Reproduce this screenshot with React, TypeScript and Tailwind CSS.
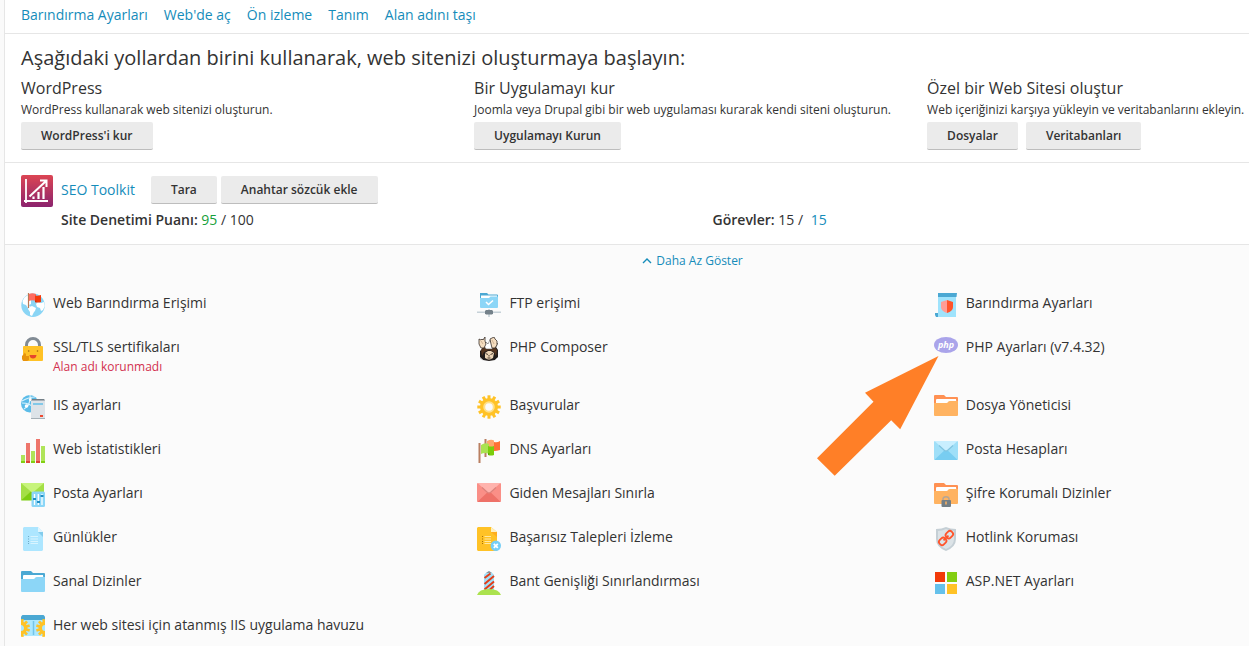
import React from "react";

type IconProps = { children: React.ReactNode };

function Icon({ children }: IconProps) {
  return (
    <svg viewBox="0 0 24 24" className="size-6 shrink-0" aria-hidden="true">
      {children}
    </svg>
  );
}

const GlobeFlag = () => (
  <Icon>
    <circle cx="12" cy="12.300" r="11.700" fill="#8ad5f5" />
    <path d="m1.500 8 2-3.500L7 2l3 1v8l-2 1 1 2-2 1-2-3-3-1z" fill="#fff" />
    <path d="m8 14 3-1 4 2-1 3-1 1-2 4-2-1v-3l-2-3zM17 9l3 1 3-1 .7 4-1.700 4-2 1-1-3-3-1-1-3z" fill="#fff" />
    <path d="M7.500 0v15" stroke="#b87955" strokeWidth="1.200" />
    <path d="M8 1q3-1.500 7 0v7q-4-1.500-7 0z" fill="#ff6c60" />
    <path d="M14 2.500q3 .5 6-.5v7q-3 1-6 .3z" fill="#f33a0b" />
    <path d="M14 7.500v1.800l2-1.300z" fill="#c12c08" />
  </Icon>
);

const PadlockFace = () => (
  <Icon>
    <path d="M5.500 11V8a6.500 6.500 0 0 1 13 0v3" fill="none" stroke="#818b94" strokeWidth="3" />
    <rect x="2" y="9" width="20" height="15" rx="1" fill="#ffc226" />
    <circle cx="7.700" cy="14" r=".8" fill="#9b6210" />
    <circle cx="16.500" cy="14" r=".8" fill="#9b6210" />
    <path d="M8.500 18h7q-.5 3.500-3.500 3.500T8.500 18z" fill="#e6472c" />
    <path d="M3.500 15.500 5 17v2h3v4l-2 1H2l-1-2v-3l2-2z" fill="#e8930c" />
  </Icon>
);

const GlobeServer = () => (
  <Icon>
    <circle cx="8.700" cy="8.700" r="8.700" fill="#5bbce8" />
    <path d="M1 6q7-4 13-4M3 14Q10 10 9 0M1 8q8 0 12 5" fill="none" stroke="#d8f2fd" strokeWidth="1.200" />
    <circle cx="5.500" cy="11" r="1.800" fill="#fff" />
    <circle cx="9.500" cy="4.500" r="1.600" fill="#fff" />
    <path d="M10 5.500 11 4h12l1 1.500V24H10z" fill="#dde3e8" />
    <path d="M10 5.500 11 4h12l1 1.500z" fill="#737f87" />
    <path d="M12 9h10" stroke="#5bbce8" strokeWidth="1.400" />
    <path d="M10 23.500h14" stroke="#a5afb6" />
    <path d="M19 21h3" stroke="#ef4a30" strokeWidth="2" />
  </Icon>
);

const Bars = () => (
  <Icon>
    <path d="M0 16h4v8H0zM10 12h4v12h-4zM20 7h4v17h-4z" fill="#afe458" />
    <path d="M5 4h4v20H5zM15 0h4v24h-4z" fill="#ee756b" />
    <path d="M0 22h4v2H0zM10 22h4v2h-4zM20 22h4v2h-4z" fill="#82cf13" />
    <path d="M5 22h4v2H5zM15 22h4v2h-4z" fill="#df4138" />
  </Icon>
);

const MailSliders = () => (
  <Icon>
    <path d="M0 0h23v17H0z" fill="#a4df46" />
    <path d="M0 17.500 11.500 7 23 17.500z" fill="#7dcd12" />
    <path d="M0 0h23L11.500 10z" fill="#c7f47b" />
    <rect x="10.500" y="8.500" width="13.500" height="15.500" rx="1.500" fill="#8bd6f7" />
    <path d="M13.500 11v11M17.300 11v11M21 11v11" stroke="#fff" strokeWidth="1.300" />
    <path d="M12 16h3M16 19h3M19.500 13h3" stroke="#218fc4" strokeWidth="1.800" />
  </Icon>
);

const LogFile = () => (
  <Icon>
    <path d="M3 0h14l5 5v18l-1 1H3l-1-1V1z" fill="#ade6ff" />
    <path d="M17 0v5h5z" fill="#e1f6ff" />
    <path d="M17 5h5v5z" fill="#84ccec" />
    <path d="M7 9.500h1M7 12h1M7 14.500h1M7 16.500h1" stroke="#6daac6" />
    <path d="M9.500 9.500H17M9.500 12H17M9.500 14.500H17M9.500 16.500H17" stroke="#d8f4ff" />
  </Icon>
);

const Folder = ({ back, front }: { back: string; front: string }) => (
  <>
    <path d="M0 1q0-1 1-1h9l2 2h11q1 0 1 1v7H0z" fill={back} />
    <path d="M2 5q0-1 1-1h19l.5 5H2z" fill="#fff" />
    <path d="M0 8h12.500q1 0 1.500-1t2-1h8v14q0 1-1 1H1q-1 0-1-1z" fill={front} />
  </>
);

const BlueFolder = () => (
  <Icon>
    <Folder back="#4ba8d3" front="#8cd6f7" />
  </Icon>
);

const OrangeFolder = () => (
  <Icon>
    <Folder back="#ff9153" front="#ffb361" />
  </Icon>
);

const LockedFolder = () => (
  <Icon>
    <Folder back="#ff9153" front="#ffb361" />
    <path d="M9 18v-2q0-2.300 3-2.300t3 2.300v2" fill="none" stroke="#b5a695" strokeWidth="1.500" />
    <rect x="7.500" y="17" width="9.500" height="7" rx="1" fill="#737e85" />
    <path d="M12 18.500v3" stroke="#ffb361" strokeWidth="1.500" />
  </Icon>
);

const poolTeeth = [-80, -48, -16, 16, 48, 80];

const GearPool = () => (
  <Icon>
    <path d="M0 3h24v18H0z" fill="#ace8ff" />
    <path d="M1.500 0h21L24 1.500V5H0V1.500z" fill="#4ba8d3" />
    <path d="M12.500 6v14" stroke="#74c5e8" strokeWidth="1.500" />
    <g fill="#ffc226">
      {poolTeeth.map((angle) => (
        <rect key={angle} x="5.500" y="11.700" width="3.500" height="2.600" transform={`rotate(${angle} 0 13)`} />
      ))}
      {poolTeeth.map((angle) => (
        <rect key={angle} x="15" y="11.700" width="3.500" height="2.600" transform={`rotate(${angle} 24 13)`} />
      ))}
    </g>
    <path d="M0 8.300a4.700 4.700 0 0 1 0 9.400M24 8.300a4.700 4.700 0 0 0 0 9.400" fill="none" stroke="#ffc226" strokeWidth="3.400" />
  </Icon>
);

const FolderNetwork = () => (
  <Icon>
    <path d="M3 0h7l1.500 1.500H20q1 0 1 1V14H3z" fill="#4ba8d3" />
    <path d="M4 2.500h16V6H4z" fill="#fff" />
    <path d="M3 5h9l1.500-1.500H21V14q0 1-1 1H4q-1 0-1-1z" fill="#8cd6f7" />
    <path d="m9 9 2.500 2.500L16 7.500" fill="none" stroke="#fff" strokeWidth="1.600" />
    <path d="M0 19.200h24M12 16v8" stroke="#c6d1d8" strokeWidth="1.600" />
    <path d="m8 18 1-1h6l1 1v2.500l-1 1H9l-1-1z" fill="#74818a" />
  </Icon>
);

const Composer = () => (
  <Icon>
    <path d="m3 8 3 3-3 3v6l3 3 6 1 6-1 3-3v-7l-2-3 2-4-9 3z" fill="#221d1b" />
    <path d="M4 13q2-4 8-4t8 4l-1 6-2-4-5-2-5 2-2 4z" fill="#55351f" />
    <path d="m7 9 2-4 2 2 2-4 2 5 2 1-2 3H9z" fill="#fff" stroke="#4a4643" strokeWidth=".5" />
    <path d="m2 2 2 1 1-1 1 1 2-3v4l1 3-2 4H4L2 7z" fill="#f5ddbf" stroke="#39302b" strokeWidth=".8" />
    <path d="m13 2 2-1 2-1 1 2 2 2v4l-2 3h-3l-1-4z" fill="#f5ddbf" stroke="#39302b" strokeWidth=".8" />
    <path d="m4 4 2 3M15 3l2 4" stroke="#b59676" strokeWidth=".6" />
    <path d="m8 16 3-2h3l3 2-1 5-3 1.500h-2L8 21z" fill="#ecd4b5" />
    <path d="m8.500 16.500 2.500 1m2.500 0 2.500-1M12 18v1.500m-1.500 1.500h3" stroke="#392a21" strokeWidth=".9" fill="none" />
    <path d="m3 21 3 2m12 0 2-2" stroke="#b8b8b8" strokeWidth=".8" />
  </Icon>
);

const Gear = () => (
  <Icon>
    {Array.from({ length: 12 }, (_, i) => (
      <rect key={i} x="10.500" y=".3" width="3" height="5" fill="#ffc226" transform={`rotate(${i * 30} 12 12)`} />
    ))}
    <circle cx="12" cy="12" r="9" fill="#ffc226" />
    <circle cx="12" cy="12" r="4.800" fill="#fafafa" stroke="#ffe08a" strokeWidth="2" />
  </Icon>
);

const Flags = () => (
  <Icon>
    <path d="M8.500 0v18M2.500 4v20" stroke="#b97f61" strokeWidth="2" />
    <path d="M10 2q4-2 7-.5V11q-3 1-7 0z" fill="#ffa66c" />
    <path d="M17 3q3 1 6-1v9q-3 1-6 1z" fill="#ff7035" />
    <path d="M4 6q4-3 8-1v10q-4-2-8 0z" fill="#aae351" />
    <path d="M11 7q3 1 6 0v9q-3 1-6 0z" fill="#7bcd0b" />
    <path d="M11 14v2l2-1z" fill="#559909" />
  </Icon>
);

const Envelope = ({ base, low, top, line }: { base: string; low: string; top: string; line: string }) => (
  <>
    <rect width="24" height="19" rx="1" fill={base} />
    <path d="m.5 18.700 9.500-9h4l9.500 9-.5.300H1z" fill={low} />
    <path d="m.5 0 10 9q1.500 1 3 0l10-9z" fill={top} />
    <path d="m5 4.500 5.500 5q1.500 1 3 0l5.500-5" fill="none" stroke={line} strokeWidth="1.200" />
  </>
);

const RedMail = () => (
  <Icon>
    <Envelope base="#fa8f87" low="#ee7168" top="#ffb3ad" line="#dc837c" />
  </Icon>
);

const BlueMail = () => (
  <Icon>
    <g transform="translate(0 2)">
      <Envelope base="#9fdff8" low="#78cdf1" top="#c9efff" line="#82c4df" />
    </g>
  </Icon>
);

const FailedFile = () => (
  <Icon>
    <path d="M1 0h13l6 5v19H1l-1-1V1z" fill="#ffc226" />
    <path d="M14 0v5h6z" fill="#fff0c2" />
    <path d="M14 5h6v5z" fill="#ffad1d" />
    <path d="M5 9.500h1M5 12h1M5 14.500h1M5 16.500h1" stroke="#a3710b" />
    <path d="M7.500 9.500H14M7.500 12H14M7.500 14.500H14M7.500 16.500H14" stroke="#ffe8a2" />
    <circle cx="18.800" cy="18.800" r="5.200" fill="#76cef5" />
    <path d="m16.800 16.800 4 4m0-4-4 4" stroke="#fff" strokeWidth="1.800" />
  </Icon>
);

const Lighthouse = () => (
  <Icon>
    <path d="M7 4q0-1 5-4 5 3 5 4v15H7z" fill="#a2dff8" />
    <path d="m9 2 3-2 3 2z" fill="#89949b" />
    <path d="m7.500 7 6-4.500M7.500 13 17 5M7.500 18.500 17 10.500M12 19.500l5-4.500" stroke="#e33d18" strokeWidth="2" />
    <path d="M0 24q2-6 12-6t12 6z" fill="#abe24e" />
  </Icon>
);

const ShieldScroll = () => (
  <Icon>
    <path d="M4 0h18v24H4z" fill="#9fe3fc" />
    <path d="M4 0h19l-.5 4H4zM1 20h3v4H2l-1-2z" fill="#4ba8d3" />
    <path d="m13 7-6 2v5q0 4 6 6z" fill="#ff9d96" />
    <path d="m13 7 6 2v5q0 4-6 6z" fill="#ff542b" />
  </Icon>
);

const PhpBadge = () => (
  <Icon>
    <ellipse cx="12" cy="8" rx="12" ry="8" fill="#aaa4ea" />
    <text x="12" y="10.500" textAnchor="middle" fill="#fff" fontFamily="Open Sans, sans-serif" fontSize="9" fontWeight="700" fontStyle="italic">
      php
    </text>
  </Icon>
);

const LinkShield = () => (
  <Icon>
    <path d="M12 0q4 2 10 2v10q0 8-10 12Q2 20 2 12V2q6 0 10-2z" fill="#c5cfd5" />
    <path d="M12 2q4 2 8 2v8q0 7-8 10-8-3-8-10V4q4 0 8-2z" fill="#dce3e7" />
    <g fill="none" stroke="#ff542b" strokeWidth="1.800" transform="rotate(-45 12 11)">
      <rect x="3.500" y="8" width="7.500" height="6" rx="2.500" />
      <rect x="13" y="8" width="7.500" height="6" rx="2.500" />
      <path d="M8.500 11h7" />
    </g>
  </Icon>
);

const FourSquares = () => (
  <Icon>
    <path d="M1 1h10v10H1z" fill="#f23a09" />
    <path d="M13 1h10v10H13z" fill="#83ce11" />
    <path d="M1 13h10v10H1z" fill="#65c1eb" />
    <path d="M13 13h10v10H13z" fill="#ffc226" />
  </Icon>
);

const SeoIcon = () => (
  <svg viewBox="0 0 32 32" className="size-8" aria-hidden="true">
    <defs>
      <linearGradient id="seo" x1="0" y1="0" x2="0" y2="1">
        <stop stopColor="#dc4553" />
        <stop offset="1" stopColor="#8b236e" />
      </linearGradient>
    </defs>
    <rect width="32" height="32" rx="2" fill="url(#seo)" />
    <path d="M5 4v24M3 26h24" stroke="#fff" strokeWidth="1.800" fill="none" />
    <path d="M8.500 21.500 25 6M19 5.500h6.500V12" stroke="#fff" strokeWidth="2" fill="none" />
    <path d="M12.500 21.500V24M17.500 17v7M22.500 12v12" stroke="#fff" strokeWidth="2.200" />
  </svg>
);

type Tool = { label: string; icon: () => React.ReactElement; note?: string; pointed?: boolean };

const tools: Tool[] = [
  { label: "Web Barındırma Erişimi", icon: GlobeFlag },
  { label: "FTP erişimi", icon: FolderNetwork },
  { label: "Barındırma Ayarları", icon: ShieldScroll },
  { label: "SSL/TLS sertifikaları", icon: PadlockFace, note: "Alan adı korunmadı" },
  { label: "PHP Composer", icon: Composer },
  { label: "PHP Ayarları (v7.4.32)", icon: PhpBadge, pointed: true },
  { label: "IIS ayarları", icon: GlobeServer },
  { label: "Başvurular", icon: Gear },
  { label: "Dosya Yöneticisi", icon: OrangeFolder },
  { label: "Web İstatistikleri", icon: Bars },
  { label: "DNS Ayarları", icon: Flags },
  { label: "Posta Hesapları", icon: BlueMail },
  { label: "Posta Ayarları", icon: MailSliders },
  { label: "Giden Mesajları Sınırla", icon: RedMail },
  { label: "Şifre Korumalı Dizinler", icon: LockedFolder },
  { label: "Günlükler", icon: LogFile },
  { label: "Başarısız Talepleri İzleme", icon: FailedFile },
  { label: "Hotlink Koruması", icon: LinkShield },
  { label: "Sanal Dizinler", icon: BlueFolder },
  { label: "Bant Genişliği Sınırlandırması", icon: Lighthouse },
  { label: "ASP.NET Ayarları", icon: FourSquares },
  { label: "Her web sitesi için atanmış IIS uygulama havuzu", icon: GearPool },
];

const starters = [
  { title: "WordPress", text: "WordPress kullanarak web sitenizi oluşturun.", actions: ["WordPress'i kur"] },
  {
    title: "Bir Uygulamayı kur",
    text: "Joomla veya Drupal gibi bir web uygulaması kurarak kendi siteni oluşturun.",
    actions: ["Uygulamayı Kurun"],
  },
  {
    title: "Özel bir Web Sitesi oluştur",
    text: "Web içeriğinizi karşıya yükleyin ve veritabanlarını ekleyin.",
    actions: ["Dosyalar", "Veritabanları"],
  },
];

function Button({ children }: { children: React.ReactNode }) {
  return (
    <button
      type="button"
      className="h-7 rounded-xs border-b border-[#bdbdbd] bg-[#ebebeb] px-5 text-xs font-semibold whitespace-nowrap text-[#333]"
    >
      {children}
    </button>
  );
}

function ToolLink({ tool }: { tool: Tool }) {
  const Glyph = tool.icon;
  return (
    <li className="relative">
      <a href="#" className="flex min-h-6 gap-2">
        <Glyph />
        <span className="whitespace-nowrap">
          <span className="block leading-5">{tool.label}</span>
          {tool.note && <span className="block pt-0.5 text-xs leading-4 text-[#d2304f]">{tool.note}</span>}
        </span>
      </a>
      {tool.pointed && (
        <svg
          viewBox="0 0 122 120"
          className="pointer-events-none absolute top-[19px] -left-[117px] h-[120px] w-[122px]"
          aria-hidden="true"
        >
          <path d="M121.500 0 48 36.700l8.500 9L0 102.300l17.700 17.400 56.500-55.400 9 9z" fill="#ff7f27" />
        </svg>
      )}
    </li>
  );
}

export default function App() {
  return (
    <div className="min-h-screen overflow-x-hidden bg-[#fafafa] font-['Open_Sans',sans-serif] text-sm text-[#333]">
      <div className="w-[110.5%] pl-1">
        <main className="border-l border-[#e6e6e6] bg-[#fbfbfb]">
          <nav className="flex gap-4 border-b border-[#e6e6e6] bg-white px-4 pt-[5px] pb-2 leading-5 text-[#158cba]">
            {["Barındırma Ayarları", "Web'de aç", "Ön izleme", "Tanım", "Alan adını taşı"].map((label) => (
              <a key={label} href="#">
                {label}
              </a>
            ))}
          </nav>

          <section className="border-b border-[#e6e6e6] bg-white px-4 pt-2.5 pb-3">
            <h1 className="text-xl leading-7">Aşağıdaki yollardan birini kullanarak, web sitenizi oluşturmaya başlayın:</h1>
            <div className="mt-1 grid grid-cols-3 gap-4">
              {starters.map((item) => (
                <div key={item.title} className="whitespace-nowrap">
                  <h2 className="text-base leading-6">{item.title}</h2>
                  <p className="text-xs leading-5">{item.text}</p>
                  <div className="mt-0.5 flex gap-2">
                    {item.actions.map((action) => (
                      <Button key={action}>{action}</Button>
                    ))}
                  </div>
                </div>
              ))}
            </div>
          </section>

          <section className="flex gap-2 border-b border-[#e6e6e6] bg-white px-4 pt-3 pb-3.5">
            <SeoIcon />
            <div className="flex-1">
              <div className="flex items-center gap-1 pt-px">
                <a href="#" className="mr-3 text-[#158cba]">
                  SEO Toolkit
                </a>
                <Button>Tara</Button>
                <Button>Anahtar sözcük ekle</Button>
              </div>
              <div className="mt-1.5 grid grid-cols-2 leading-5">
                <p>
                  <span className="font-semibold">Site Denetimi Puanı:</span> <span className="text-[#16a03a]">95</span> / 100
                </p>
                <p>
                  <span className="font-semibold">Görevler:</span> 15 /{" "}
                  <a href="#" className="ml-1 text-[#158cba]">
                    15
                  </a>
                </p>
              </div>
            </div>
          </section>

          <section className="px-4 pt-[7px] pb-3">
            <button type="button" className="mx-auto flex items-center gap-1 text-xs leading-[18px] text-[#158cba]">
              <svg viewBox="0 0 10 10" className="size-2.5" fill="none" stroke="currentColor" strokeWidth="1.400" aria-hidden="true">
                <path d="m1 7 4-4 4 4" />
              </svg>
              Daha Az Göster
            </button>
            <ul className="mt-[23px] grid grid-cols-3 gap-x-[26px] gap-y-5">
              {tools.map((tool) => (
                <ToolLink key={tool.label} tool={tool} />
              ))}
            </ul>
          </section>
        </main>
      </div>
    </div>
  );
}
